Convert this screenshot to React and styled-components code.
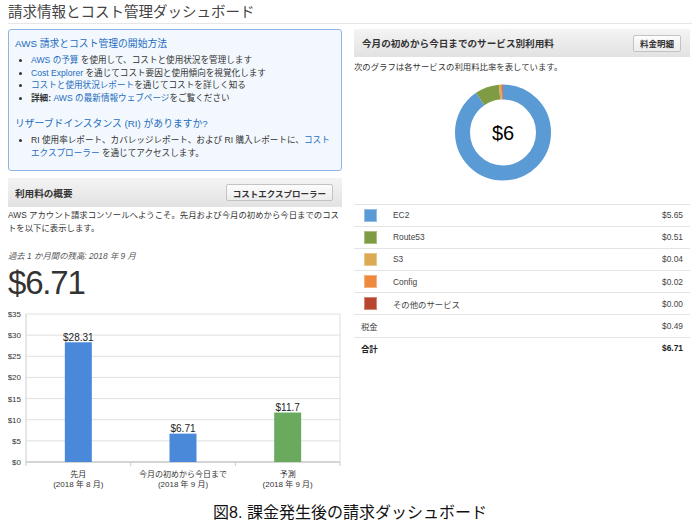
import React from 'react';
import styled, { createGlobalStyle } from 'styled-components';

const GlobalStyle = createGlobalStyle`
  body {
    margin: 0;
    background: #fff;
    font-family: "Liberation Sans", "Noto Sans CJK JP", sans-serif;
    color: #333;
  }
`;

const LINK = '#1f6cc0';

const services = [
  { name: 'EC2', amount: 5.65, color: '#5b9bd5' },
  { name: 'Route53', amount: 0.51, color: '#7f9c45' },
  { name: 'S3', amount: 0.04, color: '#dcaa52' },
  { name: 'Config', amount: 0.02, color: '#ee8a3e' },
  { name: 'その他のサービス', amount: 0.0, color: '#b8462e' },
];

const bars = [
  { value: 28.31, label: '$28.31', line1: '先月', line2: '(2018 年 8 月)', color: '#4a88da' },
  { value: 6.71, label: '$6.71', line1: '今月の初めから今日まで', line2: '(2018 年 9 月)', color: '#4a88da' },
  { value: 11.7, label: '$11.7', line1: '予測', line2: '(2018 年 9 月)', color: '#6aaa5f' },
];

const Page = styled.div`
  width: 700px;
  height: 530px;
  padding: 0 8px;
  box-sizing: border-box;
  overflow: hidden;
`;

const Title = styled.h1`
  margin: 0 0 5px;
  padding-top: 2px;
  font-size: 14.5px;
  line-height: 21px;
  font-weight: normal;
  color: #444;
  border-bottom: 1px solid #e6e6e6;
`;

const Columns = styled.div`
  display: grid;
  grid-template-columns: 334px 336px;
  column-gap: 12px;
  align-items: start;
`;

const Column = styled.div`
  display: flex;
  flex-direction: column;
`;

const InfoBox = styled.div`
  height: 142px;
  box-sizing: border-box;
  padding: 6px 6px 0;
  border: 1px solid #8fb6e2;
  border-radius: 3px;
  background: #f2f8fd;
`;

const BoxHeading = styled.h3`
  margin: ${(p) => (p.$second ? '11px' : '0')} 0 0;
  font-size: 9.8px;
  line-height: 16px;
  font-weight: normal;
  color: ${LINK};
`;

const List = styled.ul`
  margin: 2px 0 0;
  padding-left: 16px;
  font-size: 8.6px;
  line-height: 12.7px;
  color: #333;
`;

const Link = styled.span`
  color: ${LINK};
`;

const Strong = styled.b`
  font-weight: bold;
`;

const PanelHeader = styled.div`
  display: flex;
  align-items: center;
  justify-content: space-between;
  height: ${(p) => p.$h}px;
  margin-top: ${(p) => p.$mt || 0}px;
  padding: 0 9px 0 ${(p) => p.$pl || 7}px;
  background: linear-gradient(#f4f4f4, #e2e2e2);
`;

const PanelTitle = styled.span`
  font-size: 9.6px;
  font-weight: bold;
  color: #333;
`;

const Button = styled.button`
  height: 17px;
  padding: 0 6px;
  border: 1px solid #c3c3c3;
  border-radius: 2px;
  background: linear-gradient(#fdfdfd, #ececec);
  font-family: inherit;
  font-size: 8.5px;
  font-weight: bold;
  color: #333;
`;

const Text = styled.p`
  margin: ${(p) => p.$mt}px 0 0;
  font-size: 8.4px;
  line-height: 13px;
  color: ${(p) => (p.$italic ? '#555' : '#333')};
  font-style: ${(p) => (p.$italic ? 'italic' : 'normal')};
`;

const BigNumber = styled.div`
  margin-top: 2px;
  font-size: 33px;
  line-height: 36px;
  letter-spacing: -1.2px;
  color: #333;
`;

const Table = styled.div`
  display: flex;
  flex-direction: column;
`;

const Row = styled.div`
  display: flex;
  align-items: center;
  height: 22.2px;
  box-sizing: border-box;
  border-top: 1px solid #e4e4e4;
  padding: 0 7px 0 ${(p) => (p.$swatch ? 10 : 7)}px;
  font-size: 8.4px;
  color: ${(p) => (p.$bold ? '#222' : '#444')};
  font-weight: ${(p) => (p.$bold ? 'bold' : 'normal')};
`;

const Swatch = styled.span`
  width: 13px;
  height: 13px;
  box-sizing: border-box;
  border: 1px solid rgba(255, 255, 255, 0.35);
  background: ${(p) => p.$color};
  margin-right: 16px;
  flex: none;
`;

const Name = styled.span`
  flex: 1;
`;

const Caption = styled.div`
  margin-top: 7px;
  text-align: center;
  font-size: 16px;
  line-height: 20px;
  color: #111;
`;

function BarChart() {
  const left = 18;
  const right = 332;
  const top = 13;
  const bottom = 161;
  const scale = (bottom - top) / 35;
  const slot = (right - left) / 3;
  return (
    <svg width="334" height="195" style={{ display: 'block' }}>
      {[0, 1, 2, 3, 4, 5, 6, 7].map((i) => {
        const y = bottom - i * 5 * scale;
        return (
          <g key={i}>
            <line x1={left} x2={right} y1={y} y2={y} stroke={i === 0 ? '#aaa' : '#e0e0e0'} />
            <text x="13" y={y + 3} fontSize="8" textAnchor="end" fill="#333">
              ${i * 5}
            </text>
          </g>
        );
      })}
      <line x1={left} x2={left} y1={top} y2={bottom} stroke="#ccc" />
      <line x1={right} x2={right} y1={top} y2={bottom} stroke="#ddd" />
      {[0, 1, 2, 3].map((i) => (
        <line key={i} x1={left + i * slot} x2={left + i * slot} y1={bottom} y2={bottom + 4} stroke="#ccc" />
      ))}
      {bars.map((b, i) => {
        const cx = left + slot * (i + 0.5);
        const h = b.value * scale;
        return (
          <g key={b.label}>
            <rect x={cx - 13.5} y={bottom - h} width="27" height={h} fill={b.color} />
            <text x={cx} y={bottom - h - 1.5} fontSize="10" textAnchor="middle" fill="#222">
              {b.label}
            </text>
            <text x={cx} y="176" fontSize="8" textAnchor="middle" fill="#333">
              {b.line1}
            </text>
            <text x={cx} y="186" fontSize="8" textAnchor="middle" fill="#333">
              {b.line2}
            </text>
          </g>
        );
      })}
    </svg>
  );
}

function Donut() {
  const cx = 149;
  const cy = 58.5;
  const r = 40.5;
  const c = 2 * Math.PI * r;
  const values = [5.65, 0.51, 0.04, 0.03, 0.025];
  const total = values.reduce((a, b) => a + b, 0);
  let offset = 0;
  return (
    <svg width="336" height="130" style={{ display: 'block' }}>
      <g transform={`rotate(-90 ${cx} ${cy})`}>
        {values.map((v, i) => {
          const len = (v / total) * c;
          const el = (
            <circle
              key={i}
              cx={cx}
              cy={cy}
              r={r}
              fill="none"
              stroke={services[i].color}
              strokeWidth="15"
              strokeDasharray={`${len} ${c - len}`}
              strokeDashoffset={-offset}
            />
          );
          offset += len;
          return el;
        })}
      </g>
      <text x={cx} y={cy + 7} fontSize="20" textAnchor="middle" fill="#000">
        $6
      </text>
    </svg>
  );
}

export default function App() {
  return (
    <Page>
      <GlobalStyle />
      <Title>請求情報とコスト管理ダッシュボード</Title>
      <Columns>
        <Column>
          <InfoBox>
            <BoxHeading>AWS 請求とコスト管理の開始方法</BoxHeading>
            <List>
              <li>
                <Link>AWS の予算</Link> を使用して、コストと使用状況を管理します
              </li>
              <li>
                <Link>Cost Explorer</Link> を通じてコスト要因と使用傾向を視覚化します
              </li>
              <li>
                <Link>コストと使用状況レポート</Link>を通じてコストを詳しく知る
              </li>
              <li>
                <Strong>詳細:</Strong> <Link>AWS の最新情報ウェブページ</Link>をご覧ください
              </li>
            </List>
            <BoxHeading $second>リザーブドインスタンス (RI) がありますか?</BoxHeading>
            <List>
              <li>
                RI 使用率レポート、カバレッジレポート、および RI 購入レポートに、
                <Link>コストエクスプローラー</Link> を通じてアクセスします。
              </li>
            </List>
          </InfoBox>
          <PanelHeader $h={29} $mt={7}>
            <PanelTitle>利用料の概要</PanelTitle>
            <Button>コストエクスプローラー</Button>
          </PanelHeader>
          <Text $mt={2}>
            AWS アカウント請求コンソールへようこそ。先月および今月の初めから今日までのコストを以下に表示します。
          </Text>
          <Text $mt={15} $italic>
            過去 1 か月間の残高: 2018 年 9 月
          </Text>
          <BigNumber>$6.71</BigNumber>
          <BarChart />
        </Column>
        <Column>
          <PanelHeader $h={28} $pl={8}>
            <PanelTitle>今月の初めから今日までのサービス別利用料</PanelTitle>
            <Button>料金明細</Button>
          </PanelHeader>
          <Text $mt={3.5}>次のグラフは各サービスの利用料比率を表しています。</Text>
          <Donut />
          <Table>
            {services.map((s) => (
              <Row key={s.name} $swatch>
                <Swatch $color={s.color} />
                <Name>{s.name}</Name>
                <span>${s.amount.toFixed(2)}</span>
              </Row>
            ))}
            <Row>
              <Name>税金</Name>
              <span>$0.49</span>
            </Row>
            <Row $bold>
              <Name>合計</Name>
              <span>$6.71</span>
            </Row>
          </Table>
        </Column>
      </Columns>
      <Caption>図8. 課金発生後の請求ダッシュボード</Caption>
    </Page>
  );
}
